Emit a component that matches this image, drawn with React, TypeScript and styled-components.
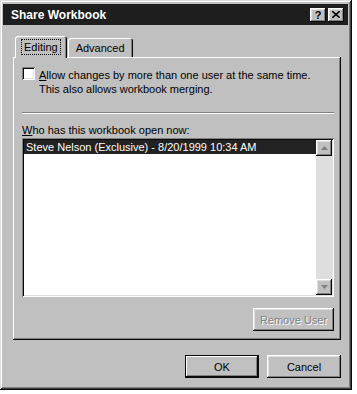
import React from 'react'
import styled, { createGlobalStyle } from 'styled-components'

const Global = createGlobalStyle`
  html, body {
    margin: 0;
    padding: 0;
    background: #ffffff;
  }
  body {
    font-family: "Liberation Sans", Arial, sans-serif;
    font-size: 11px;
    color: #000;
  }
`

const Window = styled.div`
  width: 352px;
  height: 390px;
  box-sizing: border-box;
  background: #c0c0c0;
  padding: 4px 4px 3px 3px;
  box-shadow: inset -1px -1px #0a0a0a, inset 1px 1px #dfdfdf,
    inset -2px -2px #404040, inset 2px 2px #ffffff, inset -3px -3px #808080;
  display: flex;
  flex-direction: column;
`

const TitleBar = styled.div`
  height: 21px;
  background: #1e1e1e;
  display: flex;
  align-items: center;
  justify-content: space-between;
  padding: 0 4px 0 8px;
`

const Title = styled.span`
  color: #ffffff;
  font-weight: bold;
  font-size: 12px;
`

const TitleButtons = styled.div`
  display: flex;
  gap: 2px;
`

const raised = `
  box-shadow: inset -1px -1px #0a0a0a, inset 1px 1px #ffffff,
    inset -2px -2px #808080, inset 2px 2px #dfdfdf;
`

const CaptionButton = styled.div`
  width: 16px;
  height: 14px;
  background: #c0c0c0;
  ${raised}
  display: flex;
  align-items: center;
  justify-content: center;
  font-weight: bold;
  font-size: 11px;
  line-height: 14px;
  color: #000;
`

const Body = styled.div`
  flex: 1;
  display: flex;
  flex-direction: column;
  padding: 11px 7px 0 10px;
`

const Tabs = styled.div`
  display: flex;
  align-items: flex-end;
  height: 21px;
  padding-left: 2px;
  position: relative;
  z-index: 1;
`

const Tab = styled.div<{ active?: boolean }>`
  box-sizing: border-box;
  height: ${p => (p.active ? '22px' : '19px')};
  margin-bottom: ${p => (p.active ? '-1px' : '0')};
  padding: 0 ${p => (p.active ? '6px' : '8px')};
  margin-left: ${p => (p.active ? '0' : '1px')};
  background: #c0c0c0;
  border-top-left-radius: 3px;
  border-top-right-radius: 3px;
  box-shadow: inset 1px 1px #ffffff, inset -1px 0 #0a0a0a, inset -2px 0 #808080;
  display: flex;
  align-items: center;
  font-size: 11px;
`

const FocusLabel = styled.span`
  border: 1px dotted #000;
  padding: 0 2px;
  line-height: 14px;
`

const Panel = styled.div`
  height: 283px;
  box-sizing: border-box;
  background: #c0c0c0;
  box-shadow: inset -1px -1px #0a0a0a, inset 1px 1px #ffffff,
    inset -2px -2px #808080;
  padding: 10px 7px 8px 9px;
  display: flex;
  flex-direction: column;
`

const CheckRow = styled.div`
  display: flex;
  align-items: flex-start;
  gap: 4px;
`

const CheckBox = styled.div`
  width: 13px;
  height: 13px;
  flex: none;
  background: #ffffff;
  box-shadow: inset 1px 1px #808080, inset -1px -1px #ffffff,
    inset 2px 2px #0a0a0a, inset -2px -2px #dfdfdf;
`

const CheckText = styled.div`
  line-height: 14px;
  margin-top: 1px;
`

const U = styled.span`
  text-decoration: underline;
`

const Separator = styled.div`
  margin-top: 16px;
  height: 0;
  border-top: 1px solid #808080;
  border-bottom: 1px solid #ffffff;
`

const Label = styled.div`
  margin-top: 10px;
  line-height: 13px;
`

const ListBox = styled.div`
  margin-top: 1px;
  height: 159px;
  box-sizing: border-box;
  background: #ffffff;
  padding: 2px;
  box-shadow: inset 1px 1px #808080, inset -1px -1px #ffffff,
    inset 2px 2px #0a0a0a, inset -2px -2px #dfdfdf;
  display: flex;
`

const ListItems = styled.div`
  flex: 1;
`

const ListItem = styled.div<{ selected?: boolean }>`
  height: 14px;
  line-height: 14px;
  padding-left: 2px;
  background: ${p => (p.selected ? '#222222' : 'transparent')};
  color: ${p => (p.selected ? '#ffffff' : '#000000')};
  font-size: 11px;
  white-space: nowrap;
`

const ScrollBar = styled.div`
  width: 16px;
  display: flex;
  flex-direction: column;
  justify-content: space-between;
  background: #dedede;
`

const ArrowButton = styled.div`
  width: 16px;
  height: 16px;
  background: #c0c0c0;
  ${raised}
  display: flex;
  align-items: center;
  justify-content: center;
`

const ButtonRow = styled.div<{ pad?: string }>`
  display: flex;
  justify-content: flex-end;
  gap: 8px;
  padding: ${p => p.pad || '0'};
`

const Button = styled.div<{ width: number; isDefault?: boolean; disabled?: boolean }>`
  width: ${p => p.width}px;
  height: 23px;
  box-sizing: border-box;
  background: #c0c0c0;
  display: flex;
  align-items: center;
  justify-content: center;
  font-size: 11px;
  color: ${p => (p.disabled ? '#808080' : '#000')};
  text-shadow: ${p => (p.disabled ? '1px 1px #ffffff' : 'none')};
  box-shadow: ${p =>
    p.isDefault
      ? 'inset -1px -1px #0a0a0a, inset 1px 1px #0a0a0a, inset -2px -2px #0a0a0a, inset 2px 2px #ffffff, inset -3px -3px #808080'
      : 'inset -1px -1px #0a0a0a, inset 1px 1px #ffffff, inset -2px -2px #808080, inset 2px 2px #dfdfdf'};
`

const Arrow = ({ up }: { up?: boolean }) => (
  <svg width="7" height="4" viewBox="0 0 7 4">
    <path
      d={up ? 'M3.5 0 L7 4 L0 4 Z' : 'M0 0 L7 0 L3.5 4 Z'}
      fill="#808080"
    />
  </svg>
)

export default function App() {
  return (
    <>
      <Global />
      <Window>
        <TitleBar>
          <Title>Share Workbook</Title>
          <TitleButtons>
            <CaptionButton>?</CaptionButton>
            <CaptionButton>
              <svg width="8" height="7" viewBox="0 0 8 7">
                <path d="M0 0 L8 7 M8 0 L0 7" stroke="#000" strokeWidth="1.6" />
              </svg>
            </CaptionButton>
          </TitleButtons>
        </TitleBar>
        <Body>
          <Tabs>
            <Tab active>
              <FocusLabel>Editing</FocusLabel>
            </Tab>
            <Tab>Advanced</Tab>
          </Tabs>
          <Panel>
            <CheckRow>
              <CheckBox />
              <CheckText>
                <U>A</U>llow changes by more than one user at the same time.
                <br />
                This also allows workbook merging.
              </CheckText>
            </CheckRow>
            <Separator />
            <Label>
              <U>W</U>ho has this workbook open now:
            </Label>
            <ListBox>
              <ListItems>
                <ListItem selected>
                  Steve Nelson (Exclusive) - 8/20/1999 10:34 AM
                </ListItem>
              </ListItems>
              <ScrollBar>
                <ArrowButton>
                  <Arrow up />
                </ArrowButton>
                <ArrowButton>
                  <Arrow />
                </ArrowButton>
              </ScrollBar>
            </ListBox>
            <ButtonRow pad="11px 0 0 0">
              <Button width={81} disabled>
                Remove User
              </Button>
            </ButtonRow>
          </Panel>
          <ButtonRow pad="15px 0 0 0">
            <Button width={74} isDefault>
              OK
            </Button>
            <Button width={74}>Cancel</Button>
          </ButtonRow>
        </Body>
      </Window>
    </>
  )
}
